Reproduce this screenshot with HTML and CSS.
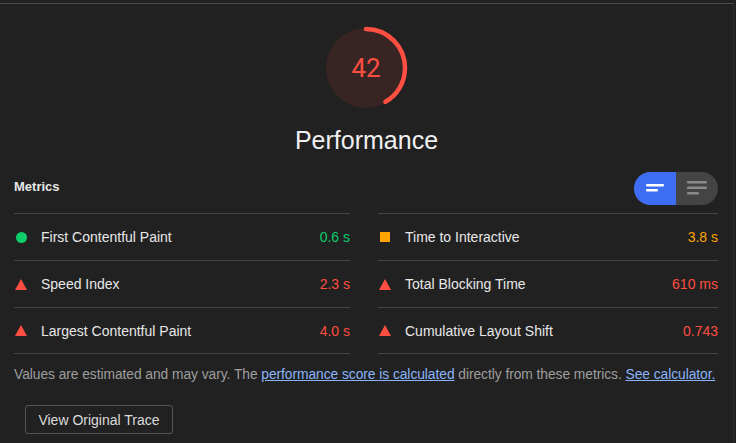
FILE: index.html
```html
<!DOCTYPE html>
<html lang="en">
<head>
    <meta charset="UTF-8">
    <title>Performance</title>
    <link rel="stylesheet" href="styles.css">
</head>
<body>
    <div class="report">
        <div class="gauge-wrap">
            <div class="gauge">
                <svg width="88" height="88" viewBox="0 0 88 88">
                    <circle class="gauge-base" cx="44" cy="44" r="40"></circle>
                    <circle class="gauge-arc" cx="44" cy="44" r="39" transform="rotate(-90 44 44)"></circle>
                </svg>
                <div class="gauge-score">42</div>
            </div>
            <div class="gauge-label">Performance</div>
        </div>

        <div class="metrics-head">
            <div class="metrics-title">Metrics</div>
            <div class="toggle">
                <span class="toggle-half active">
                    <svg width="20" height="12" viewBox="0 0 20 12"><rect x="1" y="2" width="18" height="2.4" rx="1"/><rect x="1" y="7" width="12" height="2.4" rx="1"/></svg>
                </span>
                <span class="toggle-half">
                    <svg width="22" height="16" viewBox="0 0 22 16"><rect x="1" y="1" width="20" height="2.4" rx="1"/><rect x="1" y="6.5" width="20" height="2.4" rx="1"/><rect x="1" y="12" width="12" height="2.4" rx="1"/></svg>
                </span>
            </div>
        </div>

        <div class="metrics-grid">
            <div class="metric-col">
                <div class="metric">
                    <span class="icon pass"></span>
                    <span class="metric-name">First Contentful Paint</span>
                    <span class="metric-value pass-text">0.6 s</span>
                </div>
                <div class="metric">
                    <span class="icon fail"></span>
                    <span class="metric-name">Speed Index</span>
                    <span class="metric-value fail-text">2.3 s</span>
                </div>
                <div class="metric">
                    <span class="icon fail"></span>
                    <span class="metric-name">Largest Contentful Paint</span>
                    <span class="metric-value fail-text">4.0 s</span>
                </div>
            </div>
            <div class="metric-col">
                <div class="metric">
                    <span class="icon average"></span>
                    <span class="metric-name">Time to Interactive</span>
                    <span class="metric-value average-text">3.8 s</span>
                </div>
                <div class="metric">
                    <span class="icon fail"></span>
                    <span class="metric-name">Total Blocking Time</span>
                    <span class="metric-value fail-text">610 ms</span>
                </div>
                <div class="metric">
                    <span class="icon fail"></span>
                    <span class="metric-name">Cumulative Layout Shift</span>
                    <span class="metric-value fail-text">0.743</span>
                </div>
            </div>
        </div>

        <p class="metrics-note">Values are estimated and may vary. The <a href="#">performance score is calculated</a> directly from these metrics. <a href="#">See calculator.</a></p>

        <button class="trace-btn">View Original Trace</button>
    </div>
</body>
</html>
```

FILE: styles.css
```css
* {
    margin: 0;
    padding: 0;
    box-sizing: border-box;
}

:root {
    --bg-color: #212121;
    --line-color: #444444;
    --text-color: #e8e8e8;
    --muted-color: #9e9e9e;
    --pass-color: #0cce6b;
    --average-color: #ffa400;
    --fail-color: #ff4e42;
    --link-color: #8ab4f8;
}

body {
    font-family: "Liberation Sans", Arial, sans-serif;
    font-size: 14px;
    color: var(--text-color);
    background: var(--bg-color);
    height: 443px;
    overflow: hidden;
}

.report {
    width: 734px;
    height: 440px;
    margin-top: 3px;
    border-top: 1px solid #4a4a4a;
    border-right: 1px solid #2c2c2c;
    padding: 0 14px;
}

/* 分数仪表 */
.gauge-wrap {
    display: flex;
    flex-direction: column;
    align-items: center;
    padding-top: 20px;
}

.gauge {
    position: relative;
    width: 88px;
    height: 88px;
    margin-right: 1px;
}

.gauge-base {
    fill: #382523;
    stroke: none;
}

.gauge-arc {
    fill: none;
    stroke: var(--fail-color);
    stroke-width: 4.5;
    stroke-linecap: round;
    stroke-dasharray: 102 245;
}

.gauge-score {
    position: absolute;
    top: 0;
    left: 0;
    width: 100%;
    height: 100%;
    display: flex;
    align-items: center;
    justify-content: center;
    color: var(--fail-color);
    font-family: "Roboto", "Liberation Sans", sans-serif;
    font-size: 26px;
}

.gauge-label {
    margin-top: 13px;
    font-size: 25px;
    line-height: 30px;
    color: #f0f0f0;
}

/* 指标 */
.metrics-head {
    display: flex;
    justify-content: space-between;
    align-items: center;
    margin-top: 16px;
    height: 34px;
    padding-right: 1px;
    margin-bottom: 8px;
}

.metrics-title {
    font-weight: bold;
    font-size: 13px;
    margin-top: -3px;
}

.toggle {
    display: flex;
    height: 33px;
    border-radius: 17px;
    overflow: hidden;
    background: #444444;
}

.toggle-half {
    width: 42px;
    display: flex;
    align-items: center;
    justify-content: center;
}

.toggle-half svg {
    fill: #8a8a8a;
}

.toggle-half.active {
    background: #3d6df2;
}

.toggle-half.active svg {
    fill: #ffffff;
}

.metrics-grid {
    display: grid;
    grid-template-columns: 336px 340px;
    gap: 28px;
}

.metric {
    display: flex;
    align-items: center;
    height: 47px;
    border-top: 1px solid var(--line-color);
}

.metric:last-child {
    border-bottom: 1px solid var(--line-color);
}

.icon {
    width: 14px;
    margin-right: 13px;
    display: flex;
    justify-content: center;
}

.icon.pass::before {
    content: '';
    width: 11px;
    height: 11px;
    border-radius: 50%;
    background: var(--pass-color);
}

.icon.average::before {
    content: '';
    width: 10px;
    height: 10px;
    background: var(--average-color);
}

.icon.fail::before {
    content: '';
    width: 0;
    height: 0;
    border-left: 6px solid transparent;
    border-right: 6px solid transparent;
    border-bottom: 11px solid var(--fail-color);
}

.metric-name {
    flex: 1;
    color: var(--text-color);
}

.metric-value {
    text-align: right;
}

.pass-text { color: var(--pass-color); }
.average-text { color: var(--average-color); }
.fail-text { color: var(--fail-color); }

.metrics-note {
    margin-top: 12px;
    color: var(--muted-color);
    font-size: 13.8px;
    line-height: 17px;
    white-space: nowrap;
    letter-spacing: -0.05px;
}

.metrics-note a {
    color: var(--link-color);
}

.trace-btn {
    margin: 22px 0 0 11px;
    width: 148px;
    height: 29px;
    background: transparent;
    border: 1px solid #555555;
    border-radius: 3px;
    color: #dcdcdc;
    font-family: "Liberation Sans", Arial, sans-serif;
    font-size: 14px;
}
```
